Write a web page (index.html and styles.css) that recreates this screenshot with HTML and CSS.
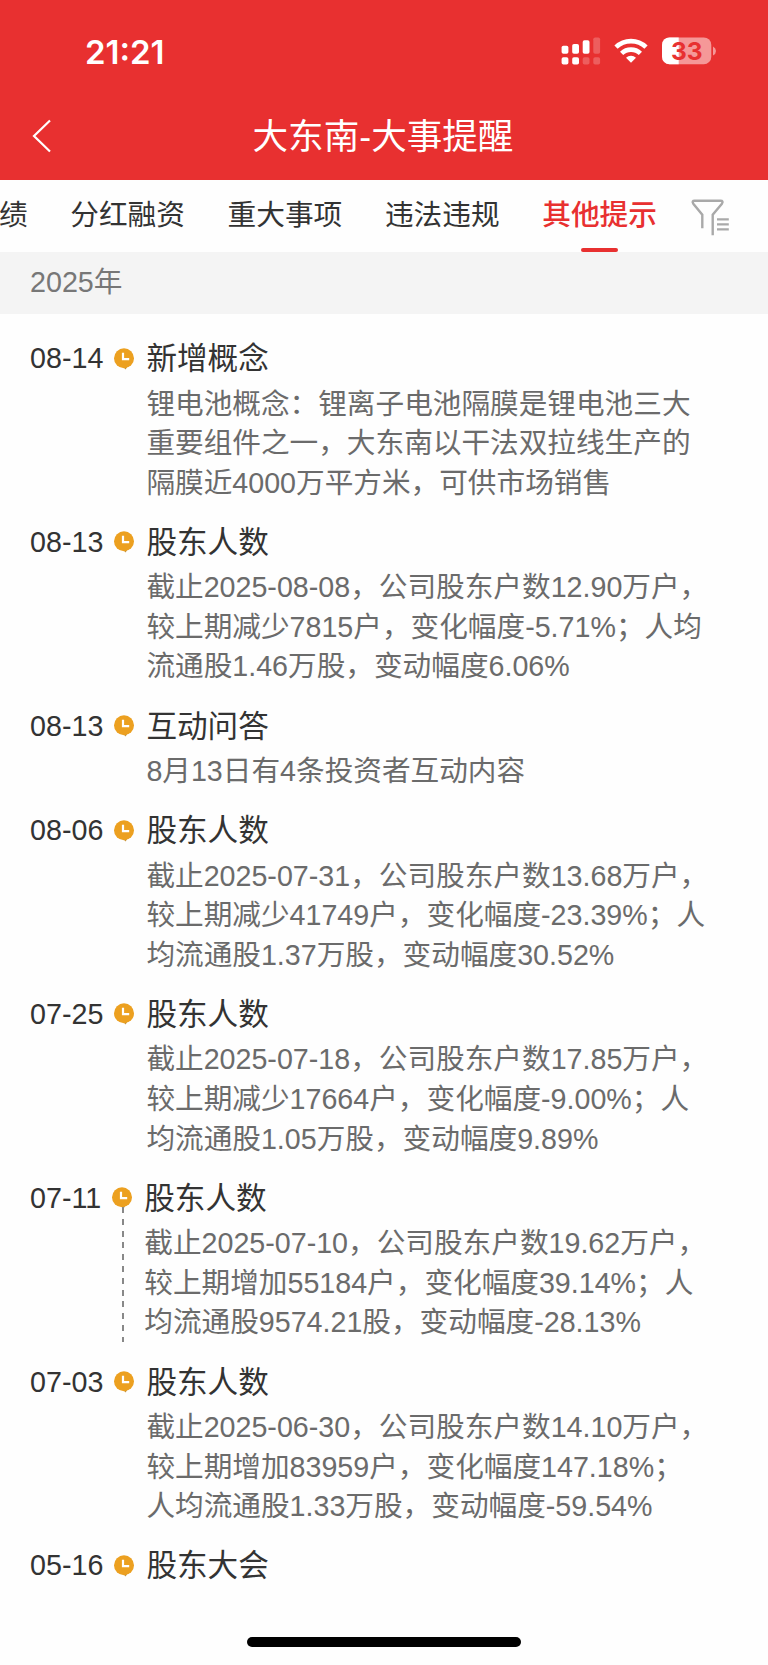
FILE: index.html
```html
<!DOCTYPE html>
<html lang="zh-CN">
<head>
<meta charset="utf-8">
<title>大东南-大事提醒</title>
<link rel="stylesheet" href="styles.css">
</head>
<body>
<!-- 公用图标 -->
<svg class="symbols">
    <symbol id="clock" viewBox="0 0 20 22">
        <path d="M9.2 19h4l-1.6 2.6z" fill="#c9953a"/>
        <circle cx="10" cy="10.3" r="10" fill="#eca020"/>
        <path d="M9 4.8v6.4h6.2" fill="none" stroke="#fff" stroke-width="2.2"/>
    </symbol>
</svg>
<div class="page">
    <!-- 顶部红色区域 -->
    <div class="header">
        <div class="status">
            <span class="time">21:21</span>
            <svg class="status-icons" width="156" height="30" viewBox="561 36 156 30">
                <g fill="#fff">
                    <rect x="561.6" y="45.7" width="6.8" height="8" rx="1.8"/>
                    <rect x="572.2" y="44" width="6.8" height="9.7" rx="1.8"/>
                    <rect x="582.7" y="40.3" width="6.8" height="13.4" rx="1.8"/>
                    <rect x="561.6" y="57.2" width="6.8" height="7.3" rx="1.8"/>
                    <rect x="572.2" y="57.2" width="6.8" height="7.3" rx="1.8"/>
                    <g opacity=".22">
                        <rect x="593.3" y="37.5" width="6.8" height="16.2" rx="1.8"/>
                        <rect x="582.7" y="57.2" width="6.8" height="7.3" rx="1.8"/>
                        <rect x="593.3" y="57.2" width="6.8" height="7.3" rx="1.8"/>
                    </g>
                    <path d="M631 62.8l-5-5.1a7.4 7.4 0 0 1 10 0z"/>
                </g>
                <g fill="none" stroke="#fff" stroke-width="4.6">
                    <path d="M616 47.2a21.5 21.5 0 0 1 30 0"/>
                    <path d="M621.6 53.4a13.6 13.6 0 0 1 18.8 0"/>
                </g>
                <clipPath id="power"><rect x="661" y="36" width="17.7" height="30"/></clipPath>
                <rect x="662" y="37.4" width="49.3" height="26.8" rx="7.5" fill="#f59898"/>
                <rect x="662" y="37.4" width="49.3" height="26.8" rx="7.5" fill="#fff" clip-path="url(#power)"/>
                <path d="M713 46.4q3 1.6 3 4.5t-3 4.5z" fill="#f59898"/>
                <text class="power-num" x="686.8" y="59.7" text-anchor="middle">33</text>
            </svg>
        </div>
        <div class="nav">
            <svg class="back" width="20" height="34" viewBox="0 0 20 34"><path d="M18 1.5L2 17l16 15.5" fill="none" stroke="#fff" stroke-width="2.2"/></svg>
            <h1>大东南-大事提醒</h1>
        </div>
    </div>
    <!-- 分类标签 -->
    <div class="tabs">
        <ul class="tab-list">
            <li>绩</li>
            <li>分红融资</li>
            <li>重大事项</li>
            <li>违法违规</li>
            <li class="active">其他提示</li>
        </ul>
        <svg class="filter" width="40" height="38" viewBox="691 199 40 38">
            <g fill="none" stroke="#a9a9a9" stroke-width="2.4">
                <path d="M702.3 228.3v-13.6l-9-11q-1.8-3 1.4-3h25.8q3.2 0 1.4 3l-9.2 11v20.6"/>
                <path d="M717 219.4h11.8M717 224.4h11.8M717 229.4h11.8" stroke-width="2.2"/>
            </g>
        </svg>
    </div>
    <div class="year">2025年</div>
    <!-- 事件列表 -->
    <ul class="list">
        <li class="item">
            <span class="date">08-14</span>
            <div class="mark"><svg class="clock"><use href="#clock"/></svg></div>
            <div class="info">
                <h2>新增概念</h2>
                <p>锂电池概念：锂离子电池隔膜是锂电池三大<br>重要组件之一，大东南以干法双拉线生产的<br>隔膜近4000万平方米，可供市场销售</p>
            </div>
        </li>
        <li class="item">
            <span class="date">08-13</span>
            <div class="mark"><svg class="clock"><use href="#clock"/></svg></div>
            <div class="info">
                <h2>股东人数</h2>
                <p>截止2025-08-08，公司股东户数12.90万户，<br>较上期减少7815户，变化幅度-5.71%；人均<br>流通股1.46万股，变动幅度6.06%</p>
            </div>
        </li>
        <li class="item">
            <span class="date">08-13</span>
            <div class="mark"><svg class="clock"><use href="#clock"/></svg></div>
            <div class="info">
                <h2>互动问答</h2>
                <p>8月13日有4条投资者互动内容</p>
            </div>
        </li>
        <li class="item">
            <span class="date">08-06</span>
            <div class="mark"><svg class="clock"><use href="#clock"/></svg></div>
            <div class="info">
                <h2>股东人数</h2>
                <p>截止2025-07-31，公司股东户数13.68万户，<br>较上期减少41749户，变化幅度-23.39%；人<br>均流通股1.37万股，变动幅度30.52%</p>
            </div>
        </li>
        <li class="item">
            <span class="date">07-25</span>
            <div class="mark"><svg class="clock"><use href="#clock"/></svg></div>
            <div class="info">
                <h2>股东人数</h2>
                <p>截止2025-07-18，公司股东户数17.85万户，<br>较上期减少17664户，变化幅度-9.00%；人<br>均流通股1.05万股，变动幅度9.89%</p>
            </div>
        </li>
        <li class="item">
            <span class="date">07-11</span>
            <div class="mark">
                <svg class="clock"><use href="#clock"/></svg>
                <div class="dash"></div>
            </div>
            <div class="info">
                <h2>股东人数</h2>
                <p>截止2025-07-10，公司股东户数19.62万户，<br>较上期增加55184户，变化幅度39.14%；人<br>均流通股9574.21股，变动幅度-28.13%</p>
            </div>
        </li>
        <li class="item">
            <span class="date">07-03</span>
            <div class="mark"><svg class="clock"><use href="#clock"/></svg></div>
            <div class="info">
                <h2>股东人数</h2>
                <p>截止2025-06-30，公司股东户数14.10万户，<br>较上期增加83959户，变化幅度147.18%；<br>人均流通股1.33万股，变动幅度-59.54%</p>
            </div>
        </li>
        <li class="item">
            <span class="date">05-16</span>
            <div class="mark"><svg class="clock"><use href="#clock"/></svg></div>
            <div class="info">
                <h2>股东大会</h2>
            </div>
        </li>
    </ul>
    <div class="home-bar"></div>
</div>
</body>
</html>
```
FILE: styles.css
```css
*{
    margin: 0;
    padding: 0;
    box-sizing: border-box;
}
body{
    background-color: #fefefe;
    font-family: "Liberation Sans", "Noto Sans CJK SC", sans-serif;
    color: #333;
}
ul{
    list-style: none;
}
h1, h2{
    font-weight: normal;
}
.symbols{
    display: none;
}
.page{
    width: 768px;
    height: 1665px;
    display: flex;
    flex-direction: column;
    overflow: hidden;
}
/* 顶部 */
.header{
    height: 179.5px;
    flex: none;
    background-color: #e83030;
    color: #fff;
}
.status{
    height: 94px;
    padding: 8px 51px 0 85px;
    display: flex;
    justify-content: space-between;
    align-items: center;
}
.time{
    padding-top: 2px;
    font: 600 33px/40px Inter, sans-serif;
}
.power-num{
    font: 700 24.5px Inter, sans-serif;
    fill: #e83030;
}
.nav{
    height: 84px;
    padding: 0 34px 0 32px;
    display: grid;
    grid-template-columns: 20px 1fr 20px;
    align-items: center;
}
.nav h1{
    padding-top: 2px;
    font-size: 35.6px;
    line-height: 48px;
    text-align: center;
}
/* 标签栏 */
.tabs{
    height: 72px;
    flex: none;
    display: flex;
}
.tab-list{
    width: 657px;
    display: flex;
    justify-content: flex-end;
    gap: 42.6px;
    font-size: 28.7px;
    line-height: 71px;
    white-space: nowrap;
}
.tab-list li{
    flex: none;
}
.tab-list .active{
    color: #e83030;
    font-weight: 500;
    display: flex;
    flex-direction: column;
    align-items: center;
}
.active::after{
    content: "";
    width: 37px;
    height: 4.5px;
    margin-top: -3px;
    border-radius: 2px;
    background-color: #e83030;
}
.filter{
    margin: 19px 0 0 34px;
}
.year{
    height: 62px;
    flex: none;
    padding-left: 30px;
    background-color: #f4f4f4;
    color: #777;
    font-size: 28.7px;
    line-height: 61px;
}
/* 事件列表 */
.list{
    padding: 22.5px 30px 0;
    flex: 1;
}
.item{
    display: flex;
    margin-bottom: 16.5px;
}
.date{
    font-size: 28.7px;
    line-height: 44px;
}
.mark{
    width: 20px;
    margin: 11.5px 12.5px 0 10.5px;
    display: flex;
    flex-direction: column;
    align-items: center;
}
.clock{
    width: 20px;
    height: 22px;
    flex: none;
}
/* 虚线 */
.dash{
    width: 2px;
    height: 135px;
    margin: -2px 0 0 2px;
    background: repeating-linear-gradient(#888 0 6px, transparent 6px 11.8px);
}
.info h2{
    font-size: 30.6px;
    line-height: 44px;
}
.info p{
    margin-top: 4.5px;
    color: #6b6b6b;
    font-size: 28.65px;
    line-height: 39.6px;
    white-space: nowrap;
}
.home-bar{
    width: 274px;
    height: 10px;
    margin: 0 auto 18px;
    border-radius: 5px;
    background-color: #000;
}
```
